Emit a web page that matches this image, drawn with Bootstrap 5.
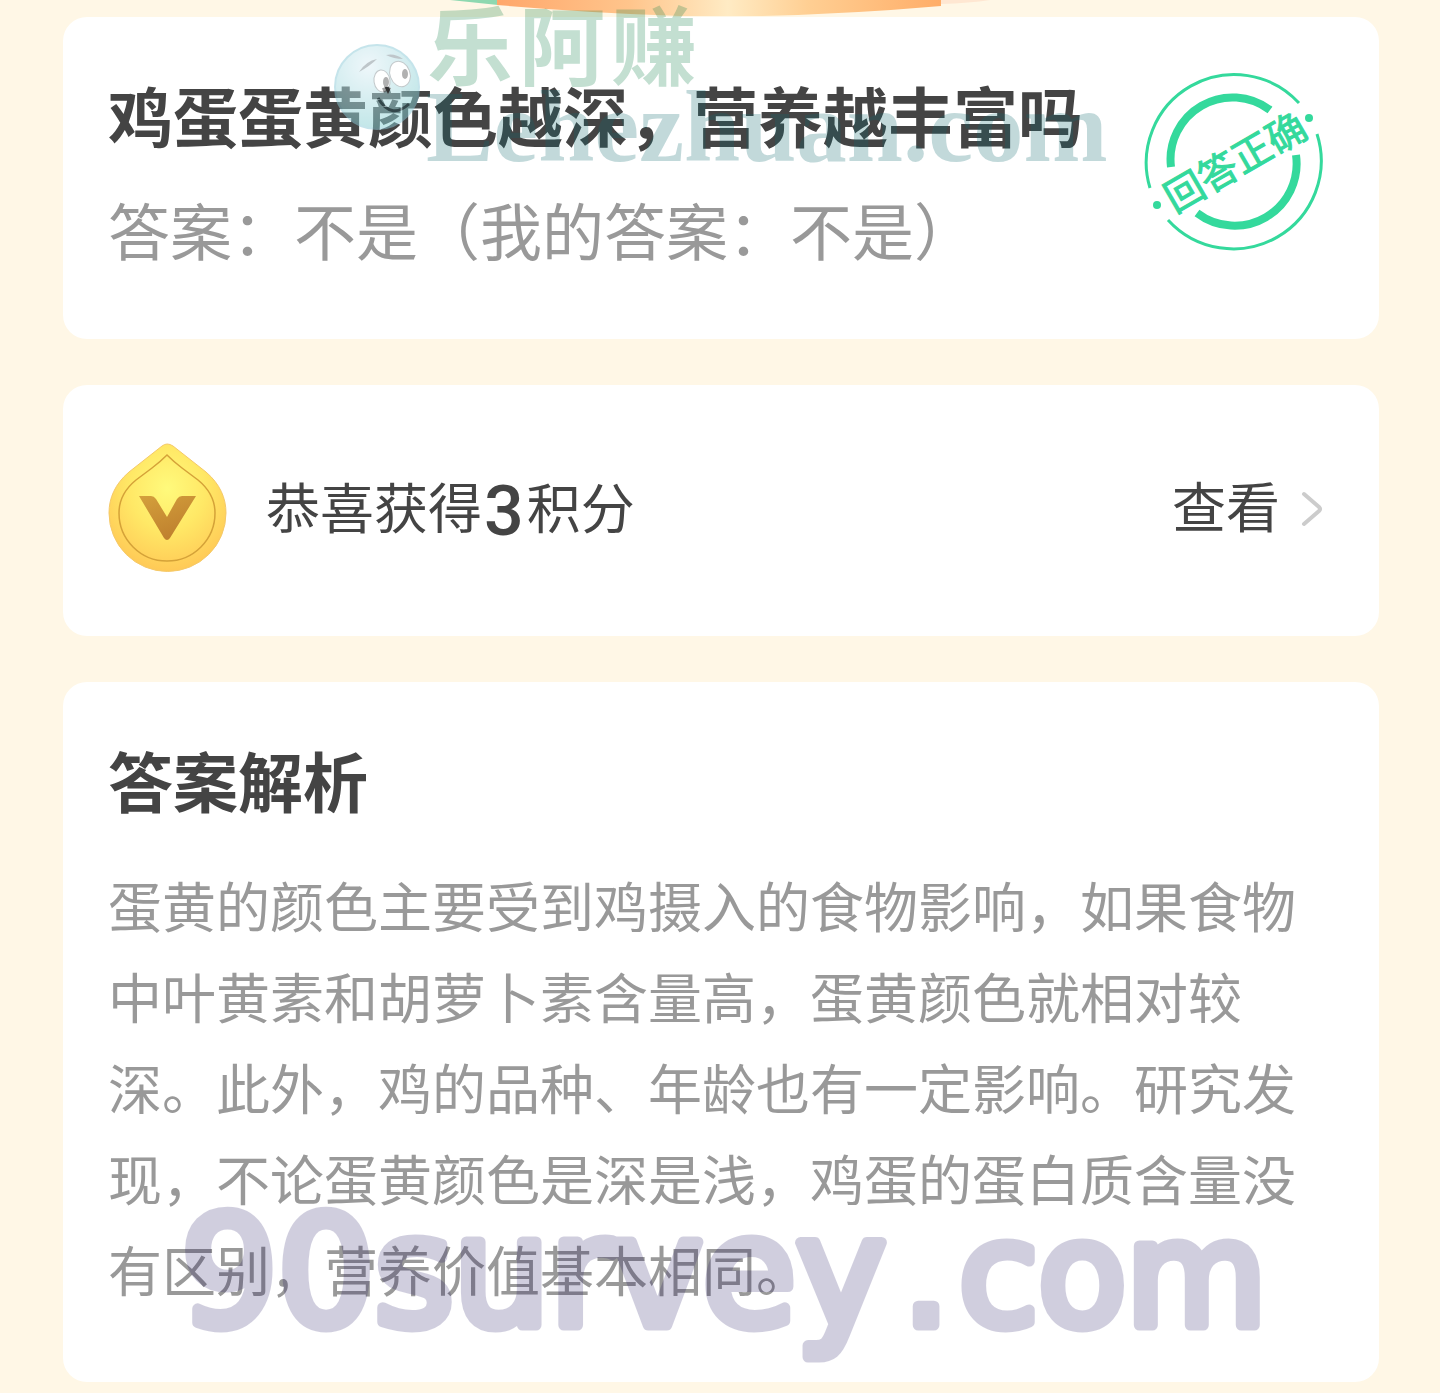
<!DOCTYPE html>
<html lang="zh-CN">
<head>
<meta charset="utf-8">
<meta name="viewport" content="width=device-width, initial-scale=1">
<title>答题结果</title>
<link rel="stylesheet" href="https://cdn.jsdelivr.net/npm/bootstrap@5.3.0/dist/css/bootstrap.min.css">
<style>
body{background:#fff7e6;color:#444;font-family:"Noto Sans CJK SC",sans-serif;overflow-x:hidden}
.page{padding:17px 61px 11px 63px;gap:46px}
.panel{background:#fff;border:0;border-radius:24px;padding:0 45px;color:#444}
.heading{font-size:65px;font-weight:700;line-height:90px;margin:0}
.answer{font-size:62px;line-height:90px;color:#999;margin:0}
.quiz{padding-top:52px;padding-bottom:65px}
.quiz .heading{margin-bottom:25px}
.stamp{width:180px;height:180px;margin:3px 10px 0 0}
.reward{height:251px;padding-bottom:4px}
.reward-text{font-size:54px;line-height:80px;margin-left:38px}
.reward-text .label,.more .label{padding-bottom:6px}
.points{font-family:Roboto,sans-serif;font-size:70px;font-weight:500;line-height:80px;padding:4px 3px 0 2px}
.more{font-size:54px;line-height:80px;color:#444;gap:20px;margin-right:10px}
.more .label{padding-bottom:8px}
.explain{padding-top:52px;padding-bottom:68px}
.explain p{font-size:54px;line-height:91px;color:#999;margin:35px 0 0}
.banner{top:0;left:440px;width:560px;height:17px}
.mark-top{top:0;left:330px;width:790px;height:180px;pointer-events:none}
.mark-bottom{left:120px;bottom:8px;width:1100px;height:196px;pointer-events:none;overflow:visible}
</style>
<script src="https://cdn.jsdelivr.net/npm/bootstrap@5.3.0/dist/js/bootstrap.bundle.min.js"></script>
</head>
<body>
<svg class="banner position-absolute" viewBox="440 0 560 17" aria-hidden="true">
<defs><linearGradient id="rib" x1="0" x2="1"><stop offset="0" stop-color="#ffa76b"/><stop offset=".3" stop-color="#ffc58c"/><stop offset=".52" stop-color="#ffebc4"/><stop offset=".7" stop-color="#ffcf93"/><stop offset="1" stop-color="#ffad68"/></linearGradient></defs>
<path d="M941 0H990Q970 3 941 4Z" fill="#ffe7d2"/>
<path d="M450 0H498V5Z" fill="#8ed8b0"/>
<path d="M497 0H941V6Q850 14 760 16H680Q590 13 497 5Z" fill="url(#rib)"/>
</svg>
<main class="page d-flex flex-column position-relative">
<section class="card panel quiz">
<div class="d-flex justify-content-between align-items-start">
<div><h1 class="heading">鸡蛋蛋黄颜色越深，营养越丰富吗</h1>
<p class="answer">答案：不是（我的答案：不是）</p></div>
<svg class="stamp flex-shrink-0" viewBox="0 0 180 180" role="img" aria-label="回答正确">
<g fill="none" stroke="#34d99c">
<path d="M155 31A88 88 0 0 0 6 116" stroke-width="3"/>
<path d="M24 148A88 88 0 0 0 173 62" stroke-width="3"/>
<path d="M126 38A62 62 0 0 0 27 95" stroke-width="8"/>
<path d="M53 141A62 62 0 0 0 152 83" stroke-width="8"/>
</g>
<g fill="#34d99c"><circle cx="165" cy="46" r="4"/><circle cx="13" cy="133" r="4"/>
<text x="91" y="105" text-anchor="middle" transform="rotate(-30 90 90)" font-size="39" stroke="#34d99c" stroke-width="1">回答正确</text></g>
</svg>
</div>
</section>
<section class="card panel reward flex-row align-items-center">
<svg width="120" height="132" viewBox="0 0 120 132" aria-hidden="true">
<defs><radialGradient id="gold" cx=".5" cy=".35" r=".65"><stop offset="0" stop-color="#fffa7c"/><stop offset=".5" stop-color="#ffe866"/><stop offset="1" stop-color="#ffc956"/></radialGradient>
<linearGradient id="vee" x1="0" y1="0" x2=".5" y2="1"><stop offset="0" stop-color="#d4a03c"/><stop offset="1" stop-color="#bf802e"/></linearGradient></defs>
<path d="M54 3Q59 -1 65 3L98 29C112 41 118 55 118 70A58 58 0 0 1 1 70C1 55 7 41 21 29Z" fill="url(#gold)" stroke="#f5c969"/>
<path d="M59 12Q66 19 74 25L90 37C101 46 107 58 107 70A48 48 0 0 1 11 70C11 58 17 46 28 37L44 25Q52 19 59 12Z" fill="none" stroke="#d5a238" stroke-width="1.5"/>
<path d="M31 53H43Q46 53 48 56L59 74L69 56Q71 53 74 53H88L62 95Q59 99 56 95Z" fill="url(#vee)"/>
</svg>
<span class="reward-text d-flex align-items-center me-auto"><span class="label">恭喜获得</span><span class="points">3</span><span class="label">积分</span></span>
<a href="#" class="more d-flex align-items-center text-decoration-none"><span class="label">查看</span>
<svg width="24" height="38" viewBox="0 0 24 38" fill="none" stroke="#ccc" stroke-width="4" stroke-linecap="round" stroke-linejoin="round" aria-hidden="true"><path d="M4 4L19 17Q21 19 19 21L4 34"/></svg></a>
</section>
<section class="card panel explain">
<h2 class="heading">答案解析</h2>
<p>蛋黄的颜色主要受到鸡摄入的食物影响，如果食物中叶黄素和胡萝卜素含量高，蛋黄颜色就相对较深。此外，鸡的品种、年龄也有一定影响。研究发现，不论蛋黄颜色是深是浅，鸡蛋的蛋白质含量没有区别，营养价值基本相同。</p>
<svg class="mark-bottom position-absolute" viewBox="0 0 1100 196" opacity=".19"><text x="-2" y="147" font-family="DejaVu Sans" font-size="152" fill="#0c0055" stroke="#0c0055" stroke-width="11" stroke-linejoin="round">90survey<tspan x="719">.</tspan><tspan x="776" font-size="144">com</tspan></text></svg>
</section>
</main>
<svg class="mark-top position-absolute" viewBox="330 0 790 180">
<defs><radialGradient id="face" cx=".4" cy=".25" r=".8"><stop offset="0" stop-color="#dff0f7"/><stop offset="1" stop-color="#7fcdd0"/></radialGradient></defs>
<g opacity=".5">
<circle cx="377" cy="87" r="42" fill="url(#face)" stroke="#8ccbd8" stroke-width="2"/>
<path d="M359 72Q366 61 377 59Q370 66 359 72ZM386 55Q395 53 403 59Q394 59 386 55Z" fill="#7f8f96"/>
<g fill="#fff" stroke="#899498"><ellipse cx="382" cy="81" rx="8" ry="11" transform="rotate(-8 382 81)"/><ellipse cx="400" cy="74" rx="10" ry="13" transform="rotate(-20 400 74)"/></g>
<ellipse cx="386" cy="82" rx="3" ry="5" fill="#666"/><ellipse cx="405" cy="74" rx="3" ry="5" fill="#666"/>
<path d="M384 86L391 88L388 94Z" fill="#222"/><path d="M378 98Q391 120 409 104" fill="none" stroke="#234b52" stroke-width="3"/></g>
<g opacity=".25" font-weight="700"><g font-size="86" fill="#13814a"><text x="427" y="79">乐</text><text x="519" y="79">阿</text><text x="611" y="79">赚</text></g>
<text x="426" y="161" font-family="Liberation Serif" font-size="101" fill="#106b70">Lehezhuan.com</text></g>
</svg>
</body>
</html>
